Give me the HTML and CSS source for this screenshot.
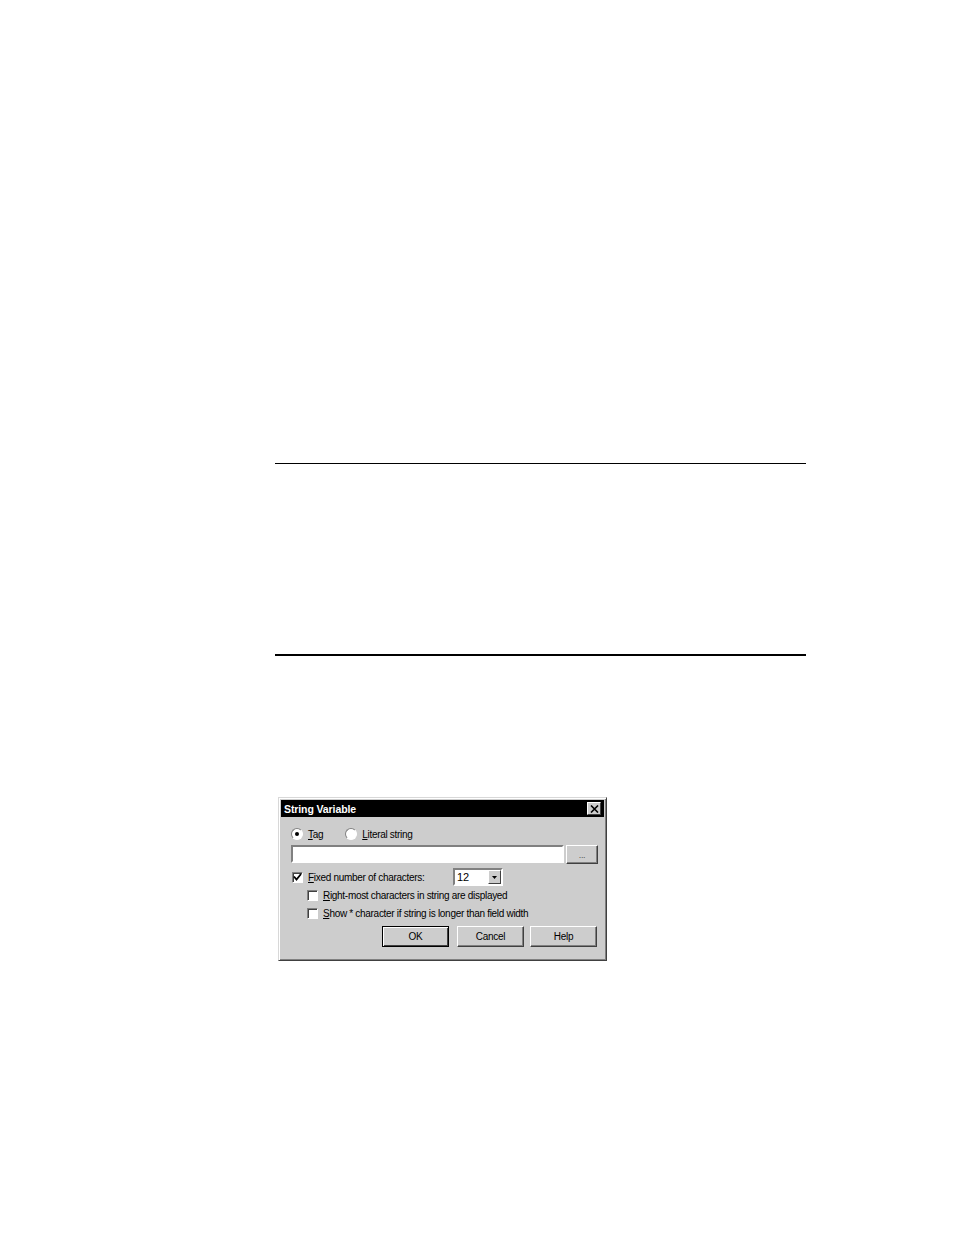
FILE: index.html
```html
<!DOCTYPE html>
<html>
<head>
<meta charset="utf-8">
<link rel="stylesheet" href="styles.css">
</head>
<body>
<div class="page">
  <div class="rule thin"></div>
  <div class="gap1"></div>
  <div class="rule thick"></div>
  <div class="dialog">
    <div class="titlebar">
      <span class="title">String Variable</span>
      <span class="close"><svg width="9" height="8" viewBox="0 0 9 8"><path d="M1 0.5 L8 7.5 M8 0.5 L1 7.5" stroke="#000" stroke-width="1.6"/></svg></span>
    </div>
    <div class="body">
      <div class="row radios">
        <span class="radio on"><span class="dot"></span></span><span class="lbl"><u>T</u>ag</span>
        <span class="radio"></span><span class="lbl"><u>L</u>iteral string</span>
      </div>
      <div class="row fieldrow">
        <span class="field"></span>
        <span class="btn browse">...</span>
      </div>
      <div class="row fixedrow">
        <span class="check"><svg width="9" height="9" viewBox="0 0 9 9"><path d="M1 3.5 L3.5 6.5 L8 1" stroke="#000" stroke-width="1.8" fill="none"/></svg></span>
        <span class="lbl fixedlbl"><u>F</u>ixed number of characters:</span>
        <span class="combo"><span class="val">12</span><span class="arrow"><svg width="5" height="3" viewBox="0 0 5 3"><path d="M0 0 H5 L2.5 3 Z" fill="#000"/></svg></span></span>
      </div>
      <div class="row sub r2">
        <span class="check"></span><span class="lbl"><u>R</u>ight-most characters in string are displayed</span>
      </div>
      <div class="row sub r3">
        <span class="check"></span><span class="lbl"><u>S</u>how * character if string is longer than field width</span>
      </div>
      <div class="row buttons">
        <span class="btn def">OK</span>
        <span class="btn">Cancel</span>
        <span class="btn">Help</span>
      </div>
    </div>
  </div>
</div>
</body>
</html>
```
FILE: styles.css
```css
html, body { margin: 0; padding: 0; background: #fff; }
body { font-family: "Liberation Sans", Arial, sans-serif; }
.page { padding-top: 463px; padding-left: 275px; width: 531px; }
.rule { background: #000; width: 531px; }
.rule.thin { height: 1px; }
.rule.thick { height: 2px; }
.gap1 { height: 190px; }

.dialog {
  margin-top: 141px;
  margin-left: 3px;
  width: 325px;
  height: 160px;
  background: #cdcdcd;
  border: 1px solid;
  border-color: #d8d8d8 #404040 #404040 #d8d8d8;
  box-shadow: inset 1px 1px 0 #fff, inset -1px -1px 0 #808080;
  padding: 1px;
  font-size: 10px;
  letter-spacing: -0.3px;
  color: #000;
}
.titlebar {
  margin: 1px 1px 0 1px;
  height: 17px;
  background: #000;
  display: flex;
  align-items: center;
  justify-content: space-between;
  padding: 0 3px 0 3px;
}
.title { color: #fff; font-weight: bold; font-size: 10.5px; letter-spacing: -0.1px; }
.close {
  width: 12px; height: 11px;
  background: #cdcdcd;
  border: 1px solid; border-color: #fff #404040 #404040 #fff;
  display: flex; align-items: center; justify-content: center;
}
.body { padding-left: 11px; }
.row { display: flex; align-items: center; }
.lbl { white-space: nowrap; }
.radios { margin-top: 10px; height: 14px; }
.radio {
  width: 10px; height: 10px; border-radius: 50%;
  background: #fff;
  border: 1px solid; border-color: #808080 #fff #fff #808080;
  margin-right: 5px;
  display: flex; align-items: center; justify-content: center;
}
.dot { width: 4px; height: 4px; border-radius: 50%; background: #000; }
.radios .lbl:nth-of-type(2) { margin-right: 22px; }
.fieldrow { margin-top: 4px; height: 18px; }
.field {
  width: 269px; height: 14px; background: #fff;
  border: 2px solid; border-color: #808080 #fff #fff #808080;
}
.btn {
  display: flex; align-items: center; justify-content: center;
  background: #cdcdcd;
  border: 1px solid; border-color: #fff #404040 #404040 #fff;
  box-shadow: inset -1px -1px 0 #808080;
  box-sizing: border-box;
}
.browse { width: 32px; height: 19px; margin-left: 2px; font-size: 9px; color: #555; padding-top: 2px; }
.fixedrow { margin-top: 5px; height: 18px; }
.check {
  width: 9px; height: 9px; background: #fff;
  border: 1px solid; border-color: #808080 #fff #fff #808080;
  box-shadow: inset 1px 1px 0 #404040;
  margin-left: 1px; margin-right: 5px;
  display: flex; align-items: center; justify-content: center;
}
.fixedlbl { width: 145px; }
.combo {
  width: 46px; height: 14px; background: #fff;
  border: 2px solid; border-color: #808080 #fff #fff #808080;
  display: flex; align-items: center; justify-content: space-between;
}
.val { padding-left: 2px; font-size: 11px; letter-spacing: 0; }
.arrow {
  width: 11px; height: 12px; background: #cdcdcd;
  border: 1px solid; border-color: #fff #404040 #404040 #fff;
  display: flex; align-items: center; justify-content: center;
}
.sub { margin-left: 15px; height: 18px; }
.buttons { margin-top: 4px; }
.buttons .btn { width: 67px; height: 21px; }
.buttons .btn:nth-child(1) { margin-left: 91px; border: 1px solid #000; box-shadow: inset 1px 1px 0 #fff, inset -1px -1px 0 #404040; }
.buttons .btn:nth-child(2) { margin-left: 8px; }
.buttons .btn:nth-child(3) { margin-left: 6px; }
u { text-decoration: underline; }
```
